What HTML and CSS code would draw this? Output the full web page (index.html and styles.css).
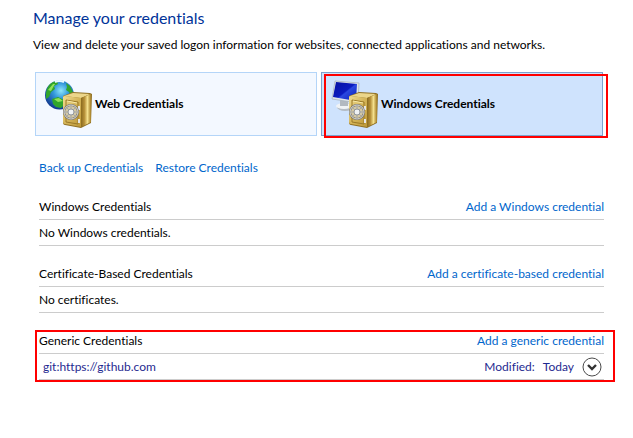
FILE: index.html
```html
<!DOCTYPE html>
<html lang="en">
<head>
<meta charset="utf-8">
<title>Credential Manager</title>
<link rel="stylesheet" href="styles.css">
</head>
<body>
<svg class="defs" aria-hidden="true">
  <defs>
    <linearGradient id="gold" x1="0" y1="0" x2="1" y2="1"><stop offset="0" stop-color="#f0dc92"/><stop offset=".5" stop-color="#d4b458"/><stop offset="1" stop-color="#bd9838"/></linearGradient>
    <linearGradient id="side" x1="0" y1="0" x2="1" y2="0"><stop offset="0" stop-color="#8a6a1e"/><stop offset=".35" stop-color="#b8923a"/><stop offset=".65" stop-color="#f4e08c"/><stop offset="1" stop-color="#a27c24"/></linearGradient>
    <radialGradient id="sea" cx=".55" cy=".35" r=".65"><stop offset="0" stop-color="#8ee6fa"/><stop offset=".4" stop-color="#3499dc"/><stop offset="1" stop-color="#10388e"/></radialGradient>
    <linearGradient id="screen" x1="0" y1="0" x2="1" y2="1"><stop offset="0" stop-color="#0510a0"/><stop offset=".5" stop-color="#0b1cc0"/><stop offset=".55" stop-color="#2a48e0"/><stop offset="1" stop-color="#0a1cb4"/></linearGradient>
    <g id="safe">
      <path d="M19 17l10-4 17 1 2 1-1 29-10 5-16-3q-2 0-2-3z" fill="#8f7024"/>
      <path d="M20 17l9-3 17 1-9 4z" fill="#ecd68a"/>
      <path d="M37 19l10-4v28l-10 5z" fill="url(#side)"/>
      <path d="M19 18q0-1 2-1l16 2v29l-16-3q-2 0-2-2z" fill="url(#gold)"/>
      <path d="M22 21l12 2v22l-12-2z" fill="none" stroke="#9a7928"/>
      <path d="M23 22l10 2" stroke="#f7e8a6"/>
      <path d="M35 27v4M35 40v4" stroke="#e6e6e6" stroke-width="2"/>
      <circle cx="27" cy="33" r="7" fill="#d3c8a4" stroke="#77756f" stroke-width="2"/>
      <circle cx="27" cy="33" r="7" fill="none" stroke="#d8d9da"/>
      <path d="M27 27v12M21 33h12M23 29l8 8M31 29l-8 8" stroke="#a3a6a9"/>
      <circle cx="27" cy="33" r="3" fill="#eef1f4" stroke="#94979b"/>
    </g>
  </defs>
</svg>
<main class="page">
  <h1 class="title">Manage your credentials</h1>
  <p class="intro">View and delete your saved logon information for websites, connected applications and networks.</p>

  <div class="vaults">
    <button class="vault" type="button">
      <svg class="vault-icon" viewBox="0 0 48 50" aria-hidden="true">
        <circle cx="15.500" cy="16" r="14.500" fill="url(#sea)"/>
        <path d="M2 14q1-8 7-11l4-1 1 3-4 2 1 3-4 3-2 5-3 2zM22 4l4 3 3 6-2 4-2-4-3-2 1-3zM8 20l6-2 6 3 2 3-5 5-5-1-3-3z" fill="#31a52c"/>
        <path d="M4 11l5-6 2 0-4 7zM10 20l5-1 4 3-5 1z" fill="#8ee25a"/>
        <path d="M11 3q4-2 9 0" fill="none" stroke="#e8faff" stroke-width="2"/>
        <use href="#safe"/>
      </svg>
      <span>Web Credentials</span>
    </button>
    <button class="vault vault-selected" type="button" aria-pressed="true">
      <svg class="vault-icon" viewBox="0 0 48 50" aria-hidden="true">
        <ellipse cx="15" cy="28" rx="8" ry="4" fill="#b4bcc4"/>
        <ellipse cx="14" cy="27" rx="8" ry="3" fill="#f0f3f5"/>
        <path d="M10 19l8 2v6h-8z" fill="#b2b9c0"/>
        <path d="M5 2l24 2-1 20L2 20z" fill="#dfe5ea" stroke="#a5b0ba" stroke-width=".7"/>
        <path d="M6 3l21 2-1 17L3 18z" fill="url(#screen)"/>
        <use href="#safe"/>
      </svg>
      <span>Windows Credentials</span>
      <span class="mark mark-vault" aria-hidden="true"></span>
    </button>
  </div>

  <nav class="actions">
    <a href="#backup">Back up Credentials</a>
    <a href="#restore">Restore Credentials</a>
  </nav>

  <section class="group">
    <div class="row"><h2>Windows Credentials</h2><a href="#add-windows">Add a Windows credential</a></div>
    <div class="row"><p>No Windows credentials.</p></div>
  </section>
  <section class="group">
    <div class="row"><h2>Certificate-Based Credentials</h2><a href="#add-certificate">Add a certificate-based credential</a></div>
    <div class="row"><p>No certificates.</p></div>
  </section>
  <section class="group">
    <div class="row"><h2>Generic Credentials</h2><a href="#add-generic">Add a generic credential</a></div>
    <div class="row entry">
      <span class="entry-name">git:https://github.com</span>
      <span>Modified:</span>
      <span>Today</span>
      <button class="expand" type="button" aria-label="Show details">
        <svg viewBox="0 0 20 20" aria-hidden="true"><circle cx="10" cy="10" r="9" fill="#fff" stroke="#4a4a4a"/><path d="M6 8l4 4 4-4" fill="none" stroke="#333" stroke-width="2.400"/></svg>
      </button>
    </div>
    <span class="mark mark-group" aria-hidden="true"></span>
  </section>
</main>
</body>
</html>
```
FILE: styles.css
```css
* { box-sizing: border-box; }

body {
  margin: 0;
  background: #fff;
  color: #000;
  font: 12px/16px Lato, "Open Sans", sans-serif;
  font-variant-ligatures: none;
}

h1, h2, p { margin: 0; font-size: 12px; font-weight: 400; }

button { font: inherit; font-variant-ligatures: none; color: inherit; cursor: pointer; }

a { color: #06c; text-decoration: none; }

.defs { position: absolute; width: 0; height: 0; }

.page { padding: 6px 29px 24px 33px; }

.title { color: #039; font-size: 16px; line-height: 24px; }

.intro { margin-top: 7px; white-space: nowrap; }

.vaults {
  display: grid;
  grid-template-columns: 1fr 1fr;
  gap: 4px;
  margin: 19px 1px 0 2px;
}

.vault {
  position: relative;
  display: flex;
  align-items: center;
  gap: 3px;
  height: 64px;
  padding: 0 8px;
  border: 1px solid #b4d5f8;
  background: #f3f8ff;
  font-weight: 700;
}

.vault-selected { border-color: #7da2ce; background: #cfe3fd; }

.vault-icon { width: 48px; height: 50px; }

.actions { display: flex; gap: 12px; margin: 24px 0 18px 6px; }

.group { position: relative; margin: 0 0 15px 6px; }

.row {
  display: flex;
  align-items: center;
  justify-content: space-between;
  height: 26px;
  border-bottom: 1px solid #ccc;
}

.entry { gap: 8px; padding: 0 2px 0 4px; color: #1f2a90; }

.entry-name { flex: 1; }

.expand { width: 20px; height: 20px; padding: 0; border: 0; background: none; }

.expand svg { display: block; width: 20px; height: 20px; }

.mark { position: absolute; border: 2px solid #f00; pointer-events: none; }

.mark-vault { inset: 1px -6px -3px 2px; }

.mark-group { inset: 2px -11px -2px -4px; }
```
